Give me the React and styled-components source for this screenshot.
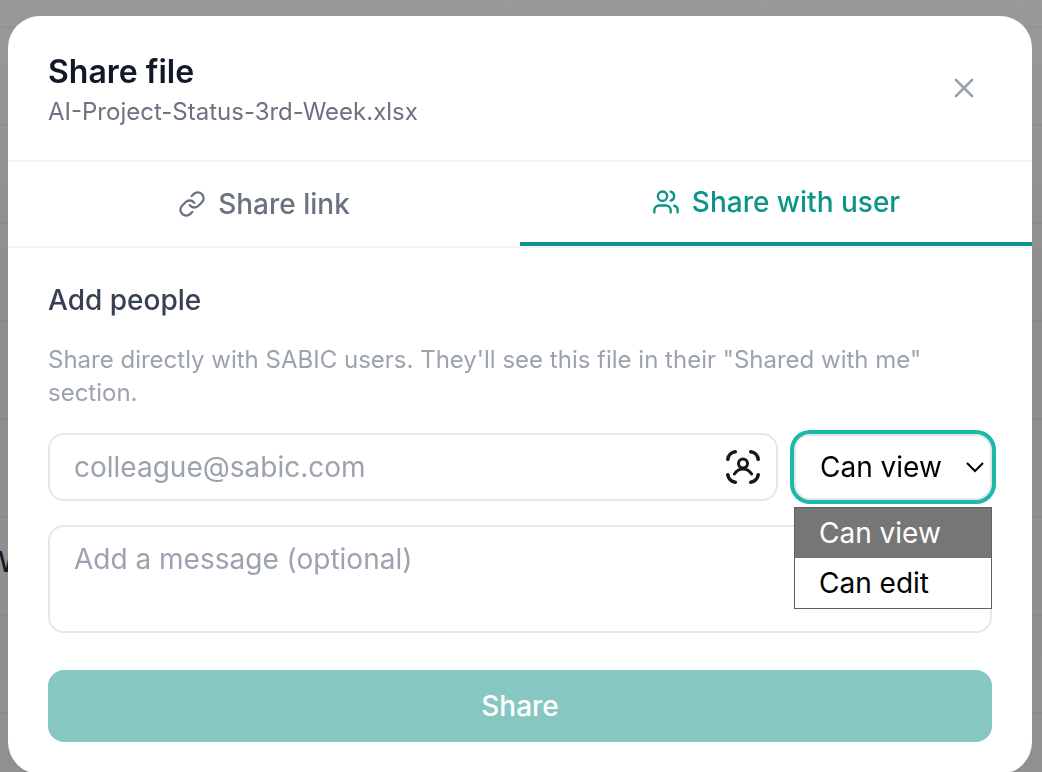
import React, { useState } from "react";
import styled, { createGlobalStyle, css } from "styled-components";
import { Link, Users, X } from "lucide-react";

const GlobalStyle = createGlobalStyle`
  *, *::before, *::after { box-sizing: border-box; }
  html, body { height: 100%; }
  body {
    margin: 0;
    overflow: hidden;
    font-family: Inter, "Liberation Sans", sans-serif;
    background: #fff;
  }
  h2, p { margin: 0; }
  button, input, select, textarea { font: inherit; }
`;

const Page = styled.div`
  height: 100vh;
  overflow: hidden;
  display: grid;
  grid-template-rows: 28px;
  grid-auto-rows: 98px;
  background: linear-gradient(#999, #8d8d8d 40%, #909090);
`;

const FileRow = styled.div`
  display: flex;
  align-items: center;
  border-bottom: 2px solid rgba(0, 0, 0, 0.03);
  padding-bottom: 8px;
  font-size: 28px;
  line-height: 40px;
  font-weight: 500;
  color: #111827;
`;

const FileName = styled.span`
  margin-left: -14px;
`;

const Overlay = styled.div`
  position: fixed;
  inset: 0;
  padding: 16px 10px 0 8px;
`;

const Dialog = styled.section`
  background: #fff;
  border-radius: 32px;
  overflow: hidden;
`;

const Header = styled.header`
  display: flex;
  align-items: center;
  justify-content: space-between;
  padding: 32px 40px;
  border-bottom: 2px solid #f3f4f6;
`;

const Title = styled.h2`
  font-size: 32px;
  line-height: 48px;
  font-weight: 600;
  color: #111827;
`;

const FileLabel = styled.p`
  font-size: 24px;
  line-height: 32px;
  color: #6b7280;
`;

const CloseButton = styled.button`
  display: flex;
  padding: 12px;
  border: 0;
  border-radius: 16px;
  background: none;
  color: #9ca3af;
`;

const Tabs = styled.div`
  display: flex;
  border-bottom: 2px solid #f3f4f6;
`;

const Tab = styled.button`
  flex: 1;
  display: flex;
  align-items: center;
  justify-content: center;
  gap: 12px;
  height: 84px;
  padding: 0;
  border: 0;
  background: none;
  font-size: 28px;
  line-height: 40px;
  font-weight: 500;
  color: #6b7280;
  ${({ $active }) =>
    $active &&
    css`
      color: #0d9488;
      border-bottom: 4px solid #0d9488;
    `}
`;

const Form = styled.form`
  display: flex;
  flex-direction: column;
  gap: 24px;
  padding: 32px 40px;
`;

const Intro = styled.div`
  display: flex;
  flex-direction: column;
  gap: 23px;
`;

const Label = styled.label`
  font-size: 28px;
  line-height: 40px;
  font-weight: 500;
  color: #374151;
`;

const Hint = styled.p`
  font-size: 24px;
  line-height: 33px;
  color: #9ca3af;
`;

const FieldRow = styled.div`
  display: flex;
  align-items: center;
  gap: 16px;
`;

const field = css`
  border: 2px solid #e5e7eb;
  border-radius: 16px;
  background: #fff;
  font-size: 28px;
  line-height: 40px;
`;

const EmailBox = styled.div`
  ${field}
  flex: 1;
  min-width: 0;
  display: flex;
  align-items: center;
  gap: 16px;
  padding: 12px 16px 12px 24px;
`;

const EmailInput = styled.input`
  flex: 1;
  min-width: 0;
  height: 40px;
  padding: 0;
  border: 0;
  outline: 0;
  background: none;
  color: #111827;
  &::placeholder { color: #9ca3af; opacity: 1; }
`;

const PickerButton = styled.button`
  display: flex;
  padding: 0;
  border: 0;
  background: none;
  color: #18181b;
`;

const SelectWrap = styled.div`
  position: relative;
  width: 198px;
`;

const PermissionSelect = styled.select`
  ${field}
  display: block;
  appearance: none;
  width: 100%;
  height: 66px;
  padding: 11px 24px;
  color: #000;
  outline: 0;
  box-shadow: 0 0 0 4px #1cb8a8;
`;

const Chevron = styled.svg`
  position: absolute;
  top: 23px;
  right: 7px;
  pointer-events: none;
`;

const OptionList = styled.ul`
  position: absolute;
  top: 100%;
  left: 0;
  right: 0;
  margin: 7px 0 0;
  padding: 0;
  list-style: none;
  border: 1px solid #616161;
  background: #fff;
`;

const OptionItem = styled.li`
  padding: 5px 24px;
  font-size: 28px;
  line-height: 40px;
  color: ${({ $selected }) => ($selected ? "#fff" : "#000")};
  background: ${({ $selected }) => ($selected ? "#767676" : "#fff")};
`;

const Message = styled.textarea`
  ${field}
  display: block;
  width: 100%;
  height: 108px;
  padding: 12px 24px;
  resize: none;
  outline: 0;
  color: #111827;
  &::placeholder { color: #9ca3af; opacity: 1; }
`;

const ShareButton = styled.button`
  height: 72px;
  margin-top: 13px;
  border: 0;
  border-radius: 16px;
  background: #86c8c1;
  color: #fff;
  font-size: 28px;
  line-height: 40px;
  font-weight: 500;
`;

const PersonScanIcon = () => (
  <svg width="34" height="34" viewBox="1 1 34 34" fill="none" stroke="currentColor"
    strokeLinecap="round" aria-hidden="true">
    <g strokeWidth="3.6">
      <path d="M2.8 10.2a8.6 8.6 0 0 1 7.4-7.4" />
      <path d="M25.8 2.8a8.6 8.6 0 0 1 7.4 7.4" />
      <path d="M33.2 25.8a8.6 8.6 0 0 1-7.4 7.4" />
      <path d="M10.2 33.2a8.6 8.6 0 0 1-7.4-7.4" />
    </g>
    <circle cx="18" cy="14.5" r="4.5" strokeWidth="3" />
    <path d="M9.4 25c2-3.200 5.200-5 8.600-5s6.600 1.800 8.600 5" strokeWidth="3" />
  </svg>
);

const rows = ["", "", "", "", "", "W", "", ""];
const permissions = ["Can view", "Can edit"];

export default function App() {
  const [permission, setPermission] = useState("Can view");
  return (
    <>
      <GlobalStyle />
      <Page aria-hidden="true">
        <FileRow />
        {rows.map((name, i) => (
          <FileRow key={i}>{name && <FileName>{name}</FileName>}</FileRow>
        ))}
      </Page>
      <Overlay>
        <Dialog role="dialog" aria-labelledby="share-title">
          <Header>
            <div>
              <Title id="share-title">Share file</Title>
              <FileLabel>AI-Project-Status-3rd-Week.xlsx</FileLabel>
            </div>
            <CloseButton type="button" aria-label="Close">
              <X size={32} strokeWidth={2} />
            </CloseButton>
          </Header>
          <Tabs role="tablist">
            <Tab type="button" role="tab" aria-selected="false">
              <Link size={28} />
              Share link
            </Tab>
            <Tab type="button" role="tab" aria-selected="true" $active>
              <Users size={28} />
              Share with user
            </Tab>
          </Tabs>
          <Form onSubmit={(e) => e.preventDefault()}>
            <Intro>
              <Label htmlFor="email">Add people</Label>
              <Hint>
                Share directly with SABIC users. They'll see this file in their "Shared with me"
                section.
              </Hint>
            </Intro>
            <FieldRow>
              <EmailBox>
                <EmailInput id="email" type="email" placeholder="colleague@sabic.com" />
                <PickerButton type="button" aria-label="Pick a contact">
                  <PersonScanIcon />
                </PickerButton>
              </EmailBox>
              <SelectWrap>
                <PermissionSelect
                  aria-label="Permission"
                  value={permission}
                  onChange={(e) => setPermission(e.target.value)}
                >
                  {permissions.map((p) => (
                    <option key={p}>{p}</option>
                  ))}
                </PermissionSelect>
                <Chevron width="20" height="20" viewBox="0 0 20 20" fill="none" stroke="#000"
                  strokeWidth="2" aria-hidden="true">
                  <path d="M2 6l8 8 8-8" />
                </Chevron>
                <OptionList>
                  {permissions.map((p) => (
                    <OptionItem key={p} $selected={p === permission} onClick={() => setPermission(p)}>
                      {p}
                    </OptionItem>
                  ))}
                </OptionList>
              </SelectWrap>
            </FieldRow>
            <Message aria-label="Message" placeholder="Add a message (optional)" />
            <ShareButton type="submit">Share</ShareButton>
          </Form>
        </Dialog>
      </Overlay>
    </>
  );
}
